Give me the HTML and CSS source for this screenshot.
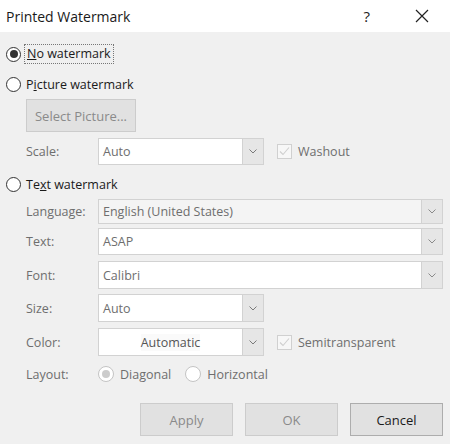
FILE: index.html
```html
<!DOCTYPE html>
<html lang="en">
  <head>
    <meta charset="UTF-8" />
    <meta name="viewport" content="width=device-width, initial-scale=1.0" />
    <title>Printed Watermark</title>
    <link rel="stylesheet" href="styles.css">
  </head>
  <body>
    <div class="dialog">
      <div class="titlebar">
        <span class="title">Printed Watermark</span>
        <span class="help">?</span>
        <span class="close">
          <svg width="14" height="14" viewBox="0 0 14 14">
            <path d="M1 1 L13 13 M13 1 L1 13" stroke="#222" stroke-width="1.2" fill="none" />
          </svg>
        </span>
      </div>

      <div class="content">
        <div class="option row-none">
          <span class="radio checked"></span>
          <span class="focus"><u>N</u>o watermark</span>
        </div>

        <div class="option row-picture">
          <span class="radio"></span>
          <span>P<u>i</u>cture watermark</span>
        </div>

        <div class="indent">
          <button class="btn select-pic" disabled>Select Picture...</button>

          <div class="field row-scale">
            <span class="field-label">Scale:</span>
            <div class="combo short">
              <span class="combo-text">Auto</span>
              <span class="combo-arrow">
                <svg width="8" height="5" viewBox="0 0 8 5"><path d="M0.5 0.5 L4 4 L7.5 0.5" stroke="#7a7a7a" fill="none" /></svg>
              </span>
            </div>
            <span class="check">
              <svg width="13" height="13" viewBox="0 0 13 13"><path d="M2 6.5 L5 9.5 L11 2.5" stroke="#cfcfcf" stroke-width="1.1" fill="none" /></svg>
            </span>
            <span class="check-label">Washout</span>
          </div>
        </div>

        <div class="option row-text">
          <span class="radio"></span>
          <span>Te<u>x</u>t watermark</span>
        </div>

        <div class="indent">
          <div class="field row-lang">
            <span class="field-label">Language:</span>
            <div class="combo wide locked">
              <span class="combo-text">English (United States)</span>
              <span class="combo-arrow">
                <svg width="8" height="5" viewBox="0 0 8 5"><path d="M0.5 0.5 L4 4 L7.5 0.5" stroke="#8a8a8a" fill="none" /></svg>
              </span>
            </div>
          </div>

          <div class="field row-textval">
            <span class="field-label">Text:</span>
            <div class="combo wide">
              <span class="combo-text">ASAP</span>
              <span class="combo-arrow">
                <svg width="8" height="5" viewBox="0 0 8 5"><path d="M0.5 0.5 L4 4 L7.5 0.5" stroke="#8a8a8a" fill="none" /></svg>
              </span>
            </div>
          </div>

          <div class="field row-font">
            <span class="field-label">Font:</span>
            <div class="combo wide">
              <span class="combo-text">Calibri</span>
              <span class="combo-arrow">
                <svg width="8" height="5" viewBox="0 0 8 5"><path d="M0.5 0.5 L4 4 L7.5 0.5" stroke="#8a8a8a" fill="none" /></svg>
              </span>
            </div>
          </div>

          <div class="field row-size">
            <span class="field-label">Size:</span>
            <div class="combo short">
              <span class="combo-text">Auto</span>
              <span class="combo-arrow">
                <svg width="8" height="5" viewBox="0 0 8 5"><path d="M0.5 0.5 L4 4 L7.5 0.5" stroke="#7a7a7a" fill="none" /></svg>
              </span>
            </div>
          </div>

          <div class="field row-color">
            <span class="field-label">Color:</span>
            <div class="combo short color">
              <span class="combo-text center"><span class="swatch-text">Automatic</span></span>
              <span class="combo-arrow">
                <svg width="8" height="5" viewBox="0 0 8 5"><path d="M0.5 0.5 L4 4 L7.5 0.5" stroke="#7a7a7a" fill="none" /></svg>
              </span>
            </div>
            <span class="check">
              <svg width="13" height="13" viewBox="0 0 13 13"><path d="M2 6.5 L5 9.5 L11 2.5" stroke="#cfcfcf" stroke-width="1.1" fill="none" /></svg>
            </span>
            <span class="check-label">Semitransparent</span>
          </div>

          <div class="field row-layout">
            <span class="field-label">Layout:</span>
            <span class="radio small dim checked"></span>
            <span class="radio-label">Diagonal</span>
            <span class="radio small dim"></span>
            <span class="radio-label">Horizontal</span>
          </div>
        </div>

        <div class="buttons">
          <button class="btn" disabled>Apply</button>
          <button class="btn" disabled>OK</button>
          <button class="btn active">Cancel</button>
        </div>
      </div>
    </div>
  </body>
</html>
```

FILE: styles.css
```css
body {
  margin: 0;
  font-family: "Open Sans", "Noto Sans", sans-serif;
  font-size: 12.5px;
  color: #1f1f1f;
  background-color: #f0f0f0;
}
.dialog {
  width: 450px;
  height: 444px;
  background-color: #f0f0f0;
  overflow: hidden;
}
.titlebar {
  height: 32px;
  background-color: #fff;
  display: flex;
  align-items: center;
}
.title {
  margin-left: 6px;
  font-size: 14px;
  color: #1a1a1a;
  flex: 1;
}
.help {
  font-size: 15px;
  margin-right: 45px;
  color: #222;
}
.close {
  display: flex;
  margin-right: 21px;
}
.content {
  padding-left: 6px;
}
.option {
  display: flex;
  align-items: center;
  height: 20px;
  font-size: 12.5px;
  color: #1a1a1a;
}
.row-none {
  margin-top: 12px;
}
.row-picture {
  margin-top: 10px;
}
.row-text {
  margin-top: 9px;
}
.radio {
  width: 13px;
  height: 13px;
  border: 1.5px solid #333;
  border-radius: 50%;
  background-color: #fff;
  margin-right: 5px;
  display: flex;
  align-items: center;
  justify-content: center;
  flex-shrink: 0;
}
.radio.checked::after {
  content: "";
  width: 8px;
  height: 8px;
  border-radius: 50%;
  background-color: #333;
}
.radio.small {
  width: 14px;
  height: 14px;
  border-width: 1px;
  margin-right: 6px;
}
.radio.dim {
  border-color: #c4c4c4;
}
.radio.dim.checked::after {
  width: 8px;
  height: 8px;
  background-color: #cccccc;
}
.focus {
  border: 1px dotted #777;
  padding: 0 2px;
  line-height: 18px;
  margin-left: -2px;
}
.indent {
  padding-left: 20px;
}
.btn {
  font-family: "Open Sans", "Noto Sans", sans-serif;
  font-size: 13px;
  background-color: #e1e1e1;
  border: 1px solid #cccccc;
  color: #8a8a8a;
  height: 33px;
  padding: 0;
}
.btn.active {
  border-color: #adadad;
  color: #1a1a1a;
}
.select-pic {
  margin-top: 5px;
  width: 110px;
}
.field {
  display: flex;
  align-items: center;
  height: 27px;
}
.field-label {
  width: 72px;
  color: #6e6e6e;
}
.row-scale {
  margin-top: 6px;
}
.row-lang {
  margin-top: 5px;
  height: 25px;
}
.row-textval {
  margin-top: 4px;
}
.row-font {
  margin-top: 6px;
  height: 28px;
}
.row-size {
  margin-top: 5px;
  height: 28px;
}
.row-color {
  margin-top: 6px;
  height: 28px;
}
.row-layout {
  margin-top: 8px;
  height: 20px;
}
.combo {
  display: flex;
  height: 100%;
  box-sizing: border-box;
  border: 1px solid #d2d2d2;
  background-color: #fff;
}
.combo.short {
  width: 166px;
}
.combo.wide {
  width: 345px;
}
.combo.locked {
  background-color: #f4f4f4;
}
.combo-text {
  flex: 1;
  display: flex;
  align-items: center;
  padding-left: 4px;
  color: #6e6e6e;
}
.combo-text.center {
  justify-content: center;
  padding-left: 0;
}
.swatch-text {
  background-color: #fafafa;
  color: #555;
}
.combo-arrow {
  width: 20px;
  display: flex;
  align-items: center;
  justify-content: center;
  background-color: #e6e6e6;
  border-left: 1px solid #d2d2d2;
}
.check {
  width: 13px;
  height: 13px;
  border: 1px solid #d0d0d0;
  background-color: #f7f7f7;
  margin-left: 13px;
  margin-right: 6px;
  display: flex;
}
.check-label {
  color: #6e6e6e;
}
.radio-label {
  color: #6e6e6e;
  margin-right: 14px;
}
.buttons {
  display: flex;
  justify-content: flex-end;
  gap: 12px;
  margin-top: 19px;
  padding-right: 7px;
}
.buttons .btn {
  width: 93px;
}
```
